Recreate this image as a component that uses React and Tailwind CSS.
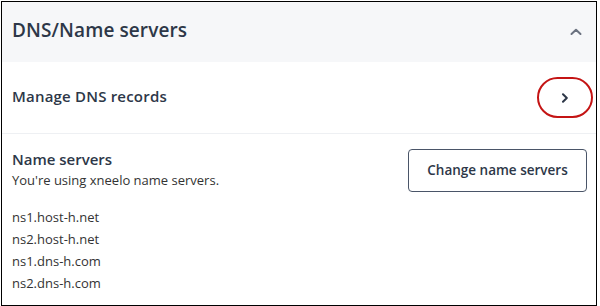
const servers = ["ns1.host-h.net", "ns2.host-h.net", "ns1.dns-h.com", "ns2.dns-h.com"];

const App = () => {
  return (
    <div className="w-[596px] h-[305px] ml-px mt-px border border-black bg-white flex flex-col font-['Open_Sans',sans-serif] text-[#2d3748]">

      {/* Header */}
      <div className="h-[60px] bg-[#f6f7f9] pl-[10px] pr-[14px] flex items-center justify-between">
        <h1 className="text-[19px] font-semibold tracking-[0.1px] mb-[3px]">
          DNS/Name servers
        </h1>
        <svg width="12" height="8" viewBox="0 0 12 8" fill="none" className="mb-[1px]">
          <path d="M1.5 6 6 1.8 10.5 6" stroke="#6b7280" strokeWidth="2" strokeLinecap="round" strokeLinejoin="round" />
        </svg>
      </div>

      {/* Manage DNS */}
      <div className="h-[72px] border-b border-[#eef0f3] pl-[10px] pr-[3px] flex items-center justify-between">
        <span className="text-[15px] font-semibold tracking-[0.2px] mb-[3px]">
          Manage DNS records
        </span>
        <button className="w-[56px] h-[41px] rounded-full border-2 border-[#c41414] flex items-center justify-center">
          <svg width="8" height="10" viewBox="0 0 8 10" fill="none">
            <path d="M2 1.2 5.8 5 2 8.8" stroke="#2d3748" strokeWidth="2" strokeLinecap="round" strokeLinejoin="round" />
          </svg>
        </button>
      </div>

      {/* Name servers */}
      <div className="pl-[10px] pr-[9px] pt-[15px] flex justify-between">
        <div>
          <h2 className="text-[15px] leading-[20px] font-semibold">
            Name servers
          </h2>
          <p className="text-[13px] leading-[22px] text-[#333]">
            You're using xneelo name servers.
          </p>
          <div className="mt-[15px] text-[13px] leading-[22px] text-[#333]">
            {servers.map((s) => (
              <div key={s}>{s}</div>
            ))}
          </div>
        </div>

        <button className="w-[179px] h-[43px] border border-[#4a5568] rounded-[4px] text-[13.5px] font-semibold">
          Change name servers
        </button>
      </div>

    </div>
  );
};

export default App;
